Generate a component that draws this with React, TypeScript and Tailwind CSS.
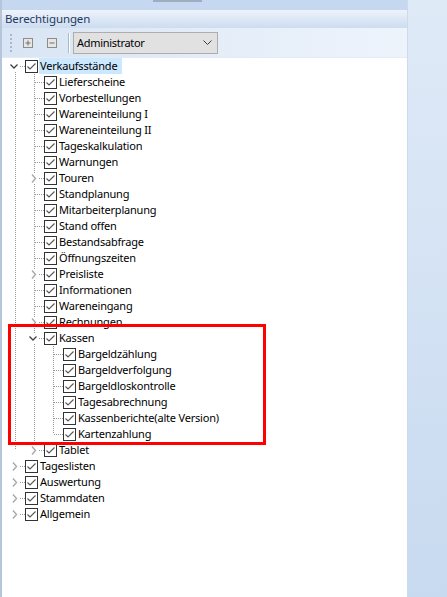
import React from "react";

type Guide = "full" | "half" | "none";

type Row = {
	label: string;
	guides: Guide[];
	top: boolean;
	bottom: boolean;
	exp?: "open" | "closed";
	selected?: boolean;
};

const lvl1 = (label: string, exp?: "open" | "closed", last = false): Row => ({
	label,
	guides: [last ? "half" : "full"],
	top: true,
	bottom: !last,
	exp,
});

const lvl2 = (label: string, last = false): Row => ({
	label,
	guides: ["full", "full"],
	top: true,
	bottom: !last,
});

const root = (label: string): Row => ({ label, guides: [], top: false, bottom: false, exp: "closed" });

const rows: Row[] = [
	{ label: "Verkaufsstände", guides: [], top: false, bottom: true, exp: "open", selected: true },
	lvl1("Lieferscheine"),
	lvl1("Vorbestellungen"),
	lvl1("Wareneinteilung I"),
	lvl1("Wareneinteilung II"),
	lvl1("Tageskalkulation"),
	lvl1("Warnungen"),
	lvl1("Touren", "closed"),
	lvl1("Standplanung"),
	lvl1("Mitarbeiterplanung"),
	lvl1("Stand offen"),
	lvl1("Bestandsabfrage"),
	lvl1("Öffnungszeiten"),
	lvl1("Preisliste", "closed"),
	lvl1("Informationen"),
	lvl1("Wareneingang"),
	lvl1("Rechnungen", "closed"),
	lvl1("Kassen", "open"),
	lvl2("Bargeldzählung"),
	lvl2("Bargeldverfolgung"),
	lvl2("Bargeldloskontrolle"),
	lvl2("Tagesabrechnung"),
	lvl2("Kassenberichte(alte Version)"),
	lvl2("Kartenzahlung", true),
	lvl1("Tablet", "closed", true),
	root("Tageslisten"),
	root("Auswertung"),
	root("Stammdaten"),
	root("Allgemein"),
];

const LINE = "#999999";

function GuideCell({ kind }: { kind: Guide }) {
	return (
		<svg width="19" height="16" className="shrink-0">
			{kind !== "none" && (
				<line x1="9.5" y1="0" x2="9.5" y2={kind === "full" ? 16 : 8} stroke={LINE} strokeDasharray="1 1" />
			)}
		</svg>
	);
}

function ExpanderCell({ row }: { row: Row }) {
	return (
		<svg width="19" height="16" className="shrink-0">
			{row.top && <line x1="9.5" y1="0" x2="9.5" y2="8" stroke={LINE} strokeDasharray="1 1" />}
			{row.bottom && <line x1="9.5" y1="8" x2="9.5" y2="16" stroke={LINE} strokeDasharray="1 1" />}
			<line x1="10" y1="8.5" x2="19" y2="8.5" stroke={LINE} strokeDasharray="1 1" />
			{row.exp && <rect x="3" y="3" width="10" height="11" fill="#fff" />}
			{row.exp === "closed" && (
				<polyline points="7,4.5 10.5,8.5 7,12.5" fill="none" stroke="#a6a6a6" strokeWidth="1.3" />
			)}
			{row.exp === "open" && (
				<polyline points="4.5,6.5 8,10 11.5,6.5" fill="none" stroke="#404040" strokeWidth="1.3" />
			)}
		</svg>
	);
}

function CheckBox() {
	return (
		<svg width="13" height="13" className="shrink-0">
			<rect x="0.5" y="0.5" width="12" height="12" fill="#fff" stroke="#333" />
			<polyline points="2.5,6.5 5,9 10.5,3.5" fill="none" stroke="#555" strokeWidth="1.1" />
		</svg>
	);
}

function TreeRow({ row }: { row: Row }) {
	return (
		<div className="flex h-4 items-center">
			{row.guides.map((g, i) => (
				<GuideCell key={i} kind={g} />
			))}
			<ExpanderCell row={row} />
			<CheckBox />
			<span
				className={`ml-px h-4 pl-px pr-[5px] text-[11px] leading-4 tracking-[-0.2px] whitespace-nowrap text-black ${row.selected ? "bg-[#cce8ff]" : ""}`}
			>
				{row.label}
			</span>
		</div>
	);
}

export default function App() {
	return (
		<div className="relative flex h-[597px] w-[447px] overflow-hidden bg-white font-['Noto_Sans',sans-serif]">
			<div className="flex w-[407px] flex-col border-l-2 border-[#b5c5da]">
				{/* top strip */}
				<div className="flex h-[10px] bg-[#c6d8ef]">
					<div className="ml-[151px] h-[2px] w-[49px] bg-[#9eadc2]" />
				</div>
				{/* panel caption */}
				<div className="h-[18px] bg-gradient-to-b from-[#edf3fb] to-[#cddcf0] pl-[3px] text-[11.5px] leading-[18px] tracking-[-0.1px] text-[#1e3a5f]">
					Berechtigungen
				</div>
				{/* toolbar */}
				<div className="flex h-[30px] items-center border-b border-[#e4ebf4] bg-gradient-to-r from-[#d9e5f4] to-[#eef4fc]">
					<svg width="3" height="20" className="ml-[8px]">
						{[1, 5, 9, 13, 17].map((y) => (
							<rect key={y} x="0" y={y} width="2" height="2" fill="#a8b7ca" />
						))}
					</svg>
					<svg width="10" height="10" className="ml-[10px]">
						<rect x="0.5" y="0.5" width="9" height="9" fill="#e6e6e6" stroke="#8c8c8c" />
						<line x1="2.5" y1="5" x2="7.5" y2="5" stroke="#6e6e6e" />
						<line x1="5" y1="2.5" x2="5" y2="7.5" stroke="#6e6e6e" />
					</svg>
					<svg width="10" height="10" className="ml-[14px]">
						<rect x="0.5" y="0.5" width="9" height="9" fill="#e6e6e6" stroke="#8c8c8c" />
						<line x1="2.5" y1="5" x2="7.5" y2="5" stroke="#6e6e6e" />
					</svg>
					<div className="ml-[11px] flex h-[20px]">
						<div className="w-px bg-[#a9b7c9]" />
						<div className="w-px bg-white" />
					</div>
					<div className="ml-[3px] flex h-[22px] w-[145px] items-center justify-between border border-[#adadad] bg-[#e1e1e1] pl-[3px] pr-[5px]">
						<span className="text-[11px] leading-4 tracking-[-0.3px] text-black">Administrator</span>
						<svg width="9" height="6">
							<polyline points="0.5,0.5 4.5,4.5 8.5,0.5" fill="none" stroke="#3c3c3c" />
						</svg>
					</div>
				</div>
				{/* tree */}
				<div className="flex-1 bg-white pl-[4px]">
					{rows.map((r) => (
						<TreeRow key={r.label} row={r} />
					))}
				</div>
			</div>
			<div className="flex-1 border-l border-[#cddaea] bg-gradient-to-b from-[#dfeaf7] to-[#c8daf0]" />
			{/* annotation frame */}
			<div className="absolute left-[8px] top-[324px] h-[121px] w-[258px] border-[3px] border-[#ff0000]" />
		</div>
	);
}
